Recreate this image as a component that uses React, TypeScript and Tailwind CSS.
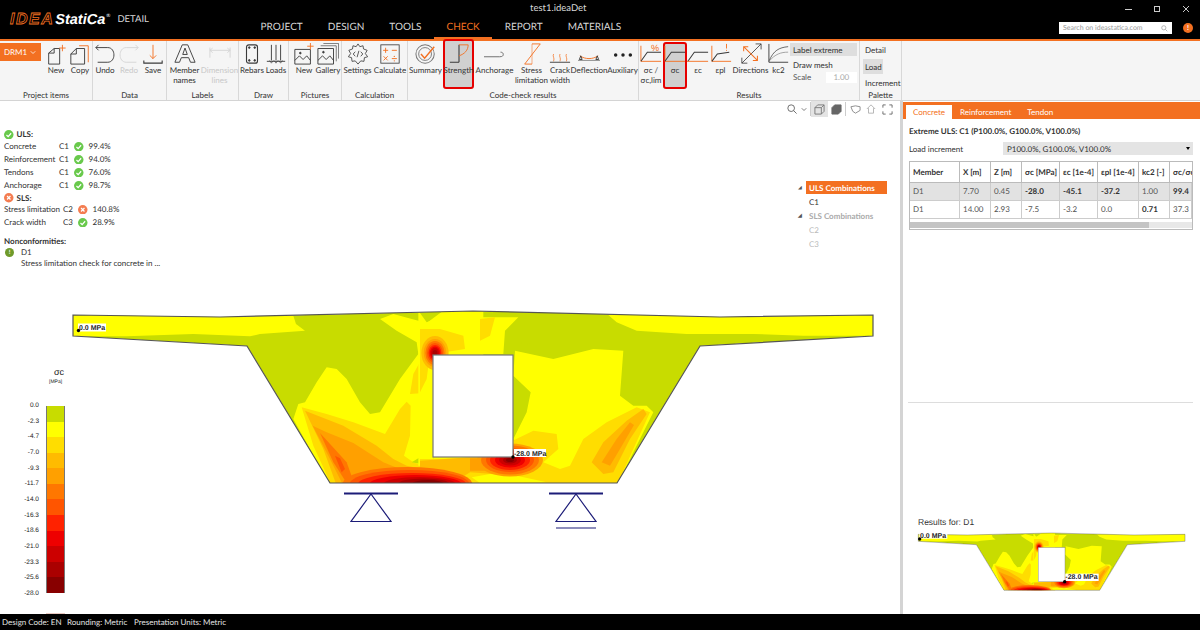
import React from "react";

const O = "#f37021";
const K = "#3a3a3a";
const L = "#d4d4d4";

function Ic({ children, className = "w-[22px] h-[22px]" }: { children: React.ReactNode; className?: string }) {
  return (
    <svg viewBox="0 0 24 24" className={className} fill="none" stroke={K} strokeWidth={1}>
      {children}
    </svg>
  );
}

function Btn({ w, label, children, active, dim }: { w: string; label: React.ReactNode; children: React.ReactNode; active?: string; dim?: boolean }) {
  return (
    <div className={`relative flex flex-col items-center shrink-0 ${w} ${dim ? "text-[#c8c8c8]" : "text-[#333]"}`}>
      {active && <div className={active} />}
      <div className="relative mt-[2px] flex justify-center">{children}</div>
      <div className="relative mt-[1px] text-center leading-[9.5px] whitespace-nowrap">{label}</div>
    </div>
  );
}

function Group({ w, label, children, bar = true }: { w: string; label: string; children: React.ReactNode; bar?: boolean }) {
  return (
    <div className={`flex flex-col shrink-0 h-full ${w} ${bar ? "border-r border-[#d8d8d8]" : ""}`}>
      <div className="flex h-[49px]">{children}</div>
      <div className="text-center text-[#333] leading-[10px] mt-[1px]">{label}</div>
    </div>
  );
}

const axisIcon = (extra: React.ReactNode) => (
  <Ic>
    {extra}
    <path d="M1 3V20H23" stroke={O} />
    <path d="M1 20L8 10H23" stroke={K} strokeWidth={1.1} />
  </Ic>
);

function Check({ bad }: { bad?: boolean }) {
  return (
    <svg viewBox="0 0 10 10" className="w-[9.5px] h-[9.5px] shrink-0">
      <circle cx="5" cy="5" r="5" fill={bad ? "#f47c50" : "#69c94c"} />
      {bad ? (
        <path d="M3.2 3.2L6.8 6.8M6.8 3.2L3.2 6.8" stroke="#fff" strokeWidth={1.3} />
      ) : (
        <path d="M2.6 5.2L4.4 7L7.5 3.4" stroke="#fff" strokeWidth={1.3} fill="none" />
      )}
    </svg>
  );
}

function Section({ id, className, labels }: { id: string; className: string; labels: { x: number; y: number; w: number; h: number; fs: number; t: string; tx: number; ty: number; dx: number; dy: number; r: number }[] }) {
  const outline = "73,316 220,318 473,312 720,318 873,316 873,337 700,347 617,484 330,484 247,347 73,337";
  const left = "translate(60 300) scale(0.33333)";
  const right = "translate(420 300) scale(0.33333)";
  const c = ["#ffdd00", "#ffbb00", "#ffa000", "#ff7700", "#ff5500", "#ff2200", "#ee0000", "#cc0000", "#aa0000", "#880000"];
  const bottom: [number, number][] = [[65, 17], [60, 14], [54, 11], [46, 9], [36, 7], [26, 5.5], [16, 4]];
  return (
    <svg viewBox="60 300 840 240" className={className}>
      <defs>
        <clipPath id={id}>
          <polygon points={outline} />
        </clipPath>
      </defs>
      <g clipPath={`url(#${id})`}>
        <polygon points={outline} fill="#c8dc00" />
        <g transform={left}>
          <polygon fill="#ffff00" points="30,40 700,50 708,75 735,95 600,105 570,112 400,105 200,112 30,112" />
          <polygon fill="#ffff00" points="700,360 715,315 735,310 770,250 800,205 830,210 860,240 900,310 930,345 960,340 1020,240 1075,165 1070,130 1010,95 960,60 1000,45 1100,72 1150,35 1270,35 1270,560 810,560" />
          <polygon fill="#ffdd00" points="725,325 800,345 880,370 975,405 1020,330 1040,308 1052,320 1050,410 1032,470 1060,490 1100,505 1130,480 1270,475 1270,560 815,560 760,440" />
          <polygon fill="#c8dc00" points="1055,490 1085,472 1112,482 1100,498" />
          <polygon fill="#ffdd00" points="1050,285 1060,225 1085,180 1120,165 1120,280" />
          <polygon fill="#ffdd00" points="1088,140 1140,100 1180,95 1270,100 1270,165 1120,165" />
          <polygon fill="#c8dc00" points="1108,300 1120,300 1120,480 1112,480" />
          <polygon fill="#ffbb00" points="735,335 850,380 950,440 1000,480 1040,500 1100,512 1130,495 1270,478 1270,560 830,560 790,450" />
          <polygon fill="#ffa000" points="758,380 800,400 880,432 970,490 1020,510 1270,505 1270,560 850,560 810,480" />
          <polygon fill="#ff7700" points="780,402 815,440 860,490 880,545 860,552 820,490" />
          <polygon fill="#ff5500" points="825,470 840,478 855,510 845,520" />
        </g>
        <g transform={right}>
          <polygon fill="#ffff00" points="565,48 1365,48 1365,110 1150,110 1000,105 800,105 650,95 590,70" />
          <polygon fill="#ffff00" points="285,155 400,180 520,150 610,155 600,290 640,320 680,320 700,340 590,560 380,560 280,420 320,340 332,280 280,230" />
          <polygon fill="#ffff00" points="-5,35 20,70 70,50 180,55 295,55 255,95 250,165 -5,165" />
          <polygon fill="#ffff00" points="-5,165 40,165 40,500 -5,500" />
          <polygon fill="#c8dc00" points="0,480 42,480 42,495 0,500" />
          <polygon fill="#ffdd00" points="180,60 225,55 210,110 180,125" />
          <polygon fill="#ffdd00" points="0,90 60,90 130,110 135,150 40,165 0,165" />
          <polygon fill="#ffdd00" points="0,165 30,165 20,240 0,280" />
          <polygon fill="#c8dc00" points="305,130 320,128 322,138 306,140" />
          <polygon fill="#c8dc00" points="328,130 342,128 342,136 328,138" />
          <polygon fill="#ffdd00" points="278,425 340,395 410,405 415,450 370,490 420,510 450,500 490,420 560,370 650,325 690,340 590,560 0,560 0,480 278,480" />
          <polygon fill="#ffff00" points="155,535 210,525 290,530 380,550 180,552" />
          <polygon fill="#ffbb00" points="515,490 550,430 620,365 670,330 680,345 630,420 580,520 550,525" />
          <polygon fill="#ffa000" points="545,490 590,420 630,370 642,378 600,450 570,500" />
          <polygon fill="#ffbb00" points="0,485 150,475 150,520 100,552 0,560" />
          <polygon fill="#ffbb00" points="150,475 278,470 345,470 350,500 290,530 150,520" />
          <polygon fill="#ffa000" points="150,478 290,478 330,490 290,515 150,515" />
        </g>
        {[17, 14, 12, 10, 8, 6.5, 5, 3].map((r, i) => (
          <ellipse key={i} cx={435} cy={354} rx={r * 0.8} ry={r} fill={c[i + 1]} />
        ))}
        {bottom.map(([rx, ry], i) => (
          <ellipse key={i} cx={428 - (rx - 16) * 0.42} cy={485} rx={rx} ry={ry} fill={c[i + 3]} />
        ))}
        {[33, 29, 24, 20, 15, 11, 7, 4].map((r, i) => (
          <ellipse key={i} cx={510} cy={461} rx={r} ry={r * 0.5} fill={c[i + 2]} />
        ))}
        <rect x="433" y="356" width="80" height="102" fill="#fff" />
      </g>
      <polygon points={outline} fill="none" stroke="#555" strokeWidth={1.2} />
      <rect x="433" y="356" width="80" height="102" fill="#fff" stroke="#777" strokeWidth={1.2} />
      {labels.map((l) => (
        <g key={l.t}>
          <rect x={l.x} y={l.y} width={l.w} height={l.h} fill="#fff" />
          <text x={l.tx} y={l.ty} fontSize={l.fs} fontFamily="Liberation Sans" fontWeight="700" fill="#222">{l.t}</text>
          <circle cx={l.dx} cy={l.dy} r={l.r} fill="#000" />
        </g>
      ))}
    </svg>
  );
}

function Support({ left }: { left: boolean }) {
  return (
    <svg viewBox="0 0 60 40" className="w-[60px] h-[40px]" fill="none" stroke="#1c1c78">
      <path d="M3 1.5H57" strokeWidth={2} />
      <path d="M30 2L50 29.5H10Z" strokeWidth={1.2} />
      {!left && <path d="M10 36H50" strokeWidth={1.2} />}
    </svg>
  );
}

const legendColors = ["#c8dc00", "#ffff00", "#ffdd00", "#ffbb00", "#ffa000", "#ff7700", "#ff5500", "#ff2200", "#ee0000", "#cc0000", "#aa0000", "#880000"];
const legendValues = ["0.0", "-2.3", "-4.7", "-7.0", "-9.3", "-11.7", "-14.0", "-16.3", "-18.6", "-21.0", "-23.3", "-25.6", "-28.0"];

const uls = [
  ["Concrete", "99.4%"],
  ["Reinforcement", "94.0%"],
  ["Tendons", "76.0%"],
  ["Anchorage", "98.7%"],
];

const headers = [
  ["Member", "w-[50px]"],
  ["X [m]", "w-[31px]"],
  ["Z [m]", "w-[31px]"],
  ["σc [MPa]", "w-[38px]"],
  ["εc [1e-4]", "w-[38px]"],
  ["εpl [1e-4]", "w-[41px]"],
  ["kc2 [-]", "w-[31px]"],
  ["σc/σc", "flex-1"],
];
const rows: [string, boolean][][] = [
  [["D1", false], ["7.70", false], ["0.45", false], ["-28.0", true], ["-45.1", true], ["-37.2", true], ["1.00", false], ["99.4", true]],
  [["D1", false], ["14.00", false], ["2.93", false], ["-7.5", false], ["-3.2", false], ["0.0", false], ["0.71", true], ["37.3", false]],
];

export default function App() {
  return (
    <div className="w-[1200px] h-[630px] flex flex-col overflow-hidden bg-white font-['Lato',sans-serif] text-[8px] text-[#333] [text-rendering:geometricPrecision]">
      {/* Title bar */}
      <header className="h-[41px] shrink-0 bg-black border-b-2 border-[#f37021] flex">
        <div className="w-[248px] shrink-0 flex items-center pl-[10px] pt-[1px]">
          <span className="font-['Liberation_Sans',sans-serif] font-bold italic text-[16px] leading-none tracking-[1.5px] text-transparent [-webkit-text-stroke:0.8px_#f37021]">IDEA</span>
          <span className="ml-[1px] font-['Liberation_Sans',sans-serif] font-bold italic text-[14.5px] leading-none text-white">StatiCa</span>
          <span className="text-[5px] text-white self-start mt-[12px] ml-[1px]">®</span>
          <span className="ml-[7px] text-[9.5px] text-[#d8d8d8]">DETAIL</span>
        </div>
        <div className="flex-1 flex flex-col">
          <div className="h-[18px] flex items-center text-[#d8d8d8]">
            <span className="ml-[282px] text-[9.5px]">test1.ideaDet</span>
            <div className="ml-auto flex items-center">
              <span className="w-[7px] h-px bg-[#ccc] mr-[22px]" />
              <span className="w-[6px] h-[6px] border border-[#ccc] mr-[22px]" />
              <svg viewBox="0 0 8 8" className="w-[8px] h-[8px] mr-[10px]" stroke="#ddd" strokeWidth={0.9}>
                <path d="M1 1L7 7M7 1L1 7" />
              </svg>
            </div>
          </div>
          <div className="flex-1 flex items-stretch">
            {["PROJECT", "DESIGN", "TOOLS", "CHECK", "REPORT", "MATERIALS"].map((n) => (
              <div
                key={n}
                className={`px-[12.5px] flex items-center text-[10px] border-b-2 ${n === "CHECK" ? "text-[#f37021] border-[#f37021]" : "text-[#d8d8d8] border-transparent"}`}
              >
                {n}
              </div>
            ))}
            <div className="ml-auto flex items-start mr-[7px]">
              <div className="w-[113px] h-[12px] mt-[4px] bg-white flex items-center justify-between px-[4px] text-[7px] text-[#999]">
                Search on ideastatica.com
                <svg viewBox="0 0 10 10" className="w-[7px] h-[7px]" fill="none" stroke="#999">
                  <circle cx="4" cy="4" r="3" />
                  <path d="M6.3 6.3L9 9" />
                </svg>
              </div>
              <div className="ml-[11px] mt-[5px] w-[10px] h-[10px] rounded-full bg-[#f37021] text-white text-[7px] leading-[10px] text-center font-bold">!</div>
            </div>
          </div>
        </div>
      </header>

      {/* Ribbon */}
      <div className="h-[60px] shrink-0 bg-[#f5f5f5] border-b border-[#d4d4d4] flex">
        <Group w="w-[93px]" label="Project items">
          <div className="w-[41px] h-[18px] mt-[2px] bg-[#f37021] text-white flex items-center justify-between pl-[4px] pr-[5px] shrink-0">
            DRM1
            <svg viewBox="0 0 8 8" className="w-[6px] h-[6px]" fill="none" stroke="#fff"><path d="M1 3L4 6L7 3" /></svg>
          </div>
          <div className="w-[3px]" />
          <Btn w="w-[24px]" label="New">
            <Ic>
              <path d="M4 23V11L10 6H16V23H4Z" />
              <path d="M4 11H10V6" />
              <path d="M19 2V9M15.5 5.5H22.5" stroke={O} />
            </Ic>
          </Btn>
          <Btn w="w-[24px]" label="Copy">
            <Ic>
              <path d="M2 23V12L8 6H17V23H2Z" />
              <path d="M2 12H8V6" />
              <path d="M11 3H21V21" stroke={O} />
            </Ic>
          </Btn>
        </Group>
        <Group w="w-[74px]" label="Data">
          <Btn w="w-[24px]" label="Undo">
            <Ic>
              <path d="M2 5H15C24 5 24 21 15 21H4" />
              <path d="M5 2L2 5L5 8" />
            </Ic>
          </Btn>
          <Btn w="w-[24px]" label="Redo" dim>
            <Ic>
              <path d="M22 5H9C0 5 0 21 9 21H20" stroke={L} />
              <path d="M19 2L22 5L19 8" stroke={L} />
            </Ic>
          </Btn>
          <Btn w="w-[24px]" label="Save">
            <Ic>
              <path d="M12 2V17M8.5 13.5L12 17L15.5 13.5" stroke={O} />
              <path d="M2 19V22H22V19" strokeWidth={1.2} />
            </Ic>
          </Btn>
        </Group>
        <Group w="w-[72px]" label="Labels">
          <Btn w="w-[35px]" label={<>Member<br />names</>}>
            <Ic>
              <path d="M1 21L9 2H15L23 21H18L16 16H8L6 21Z" />
              <path d="M9.5 12.5L12 5.5L14.5 12.5Z" />
            </Ic>
          </Btn>
          <Btn w="w-[35px]" label={<>Dimension<br />lines</>} dim>
            <Ic>
              <path d="M1 5V16M23 5V16M1 8H23M4 5.5L1 8L4 10.5M20 5.5L23 8L20 10.5" stroke={L} />
            </Ic>
          </Btn>
        </Group>
        <Group w="w-[50px]" label="Draw">
          <div className="w-[2px]" />
          <Btn w="w-[24px]" label="Rebars">
            <Ic>
              <rect x="6" y="2" width="12" height="20" rx="2.5" strokeWidth={1.2} />
              <circle cx="9" cy="5" r="0.9" fill={K} />
              <circle cx="15" cy="5" r="0.9" fill={K} />
              <circle cx="9" cy="19" r="0.9" fill={K} />
              <circle cx="15" cy="19" r="0.9" fill={K} />
            </Ic>
          </Btn>
          <Btn w="w-[24px]" label="Loads">
            <Ic>
              <path d="M7 2V19M12 2V19M17 2V19M2 20H22" />
              <path d="M5 19L7 22L9 19M10 19L12 22L14 19M15 19L17 22L19 19" strokeWidth={0.7} />
            </Ic>
          </Btn>
        </Group>
        <Group w="w-[53px]" label="Pictures">
          <div className="w-[3px]" />
          <Btn w="w-[24px]" label="New">
            <Ic>
              <path d="M2 7H19V23H2Z" />
              <path d="M2 19L7 14L11 18L15 14L19 19" />
              <circle cx="8" cy="11" r="0.9" fill={K} />
              <path d="M19 0V7M15.5 3.5H22.5" stroke={O} />
            </Ic>
          </Btn>
          <Btn w="w-[24px]" label="Gallery">
            <Ic>
              <path d="M1 6H18V23H1Z" />
              <path d="M1 19L6 14L10 18L14 14L18 19" />
              <circle cx="7" cy="10" r="0.9" fill={K} />
              <path d="M4 3H21V20M7 0.5H23.5V17" stroke={K} strokeWidth={0.7} />
            </Ic>
          </Btn>
        </Group>
        <Group w="w-[66px]" label="Calculation">
          <Btn w="w-[31px]" label="Settings">
            <Ic>
              <path d="M12 1L14 4L17.5 3L18 6.5L22 8L20 11.5L22.5 15L19 16L18.5 20L15 19.5L12 23L9 19.5L5.5 20L5 16L1.5 15L4 11.5L2 8L6 6.5L6.5 3L10 4Z" strokeWidth={0.9} />
              <path d="M9 9.5L6.8 12L9 14.5M15 9.5L17.2 12L15 14.5M13 8.5L11 15.5" strokeWidth={0.9} />
            </Ic>
          </Btn>
          <Btn w="w-[34px]" label="Calculate">
            <Ic>
              <rect x="2" y="2" width="20" height="20" stroke={K} strokeWidth={0.9} />
              <path d="M4.5 8H10M7.2 5.2V10.8M14 8H19.5M5 14.5L9.5 19M9.5 14.5L5 19M14 17H19.5" stroke={O} />
              <circle cx="16.7" cy="14.6" r="0.7" fill={O} stroke="none" />
              <circle cx="16.7" cy="19.4" r="0.7" fill={O} stroke="none" />
            </Ic>
          </Btn>
        </Group>
        <Group w="w-[231px]" label="Code-check results">
          <Btn w="w-[35px]" label="Summary">
            <Ic>
              <circle cx="11" cy="12" r="10" strokeWidth={1.1} stroke="#777" />
              <circle cx="11" cy="12" r="7" strokeWidth={1} stroke="#777" />
              <path d="M6.5 12L10.5 16.5L21 4" stroke={O} strokeWidth={1.6} />
            </Ic>
          </Btn>
          <Btn w="w-[31px]" label="Strength" active="absolute left-0 right-0 top-[-2px] h-[50px] bg-[#d0d0d0] border-2 border-[#e60000] rounded-[3px]">
            <Ic>
              <path d="M12 2V21M2 21H12" strokeWidth={1.2} />
              <path d="M12 2H22C22 8 18 12 12 14" stroke={O} />
            </Ic>
          </Btn>
          <Btn w="w-[41px]" label="Anchorage">
            <Ic>
              <path d="M0 15H17C20 15 21 14 21 12.5C21 11 20 10 18 10" strokeWidth={1} stroke="#666" />
            </Ic>
          </Btn>
          <Btn w="w-[33px]" label={<>Stress<br />limitation</>}>
            <Ic>
              <path d="M12 1H21L4 23H12" stroke={O} />
              <path d="M12 1V23" stroke={O} strokeWidth={0.6} />
            </Ic>
          </Btn>
          <Btn w="w-[24px]" label={<>Crack<br />width</>}>
            <Ic>
              <path d="M5 12C3.5 15 6.5 16 5 20M12 12C10.5 15 13.5 16 12 20M19 12C17.5 15 20.5 16 19 20" stroke={O} strokeWidth={0.8} />
              <path d="M1 21H23" />
            </Ic>
          </Btn>
          <Btn w="w-[34px]" label="Deflection">
            <Ic>
              <path d="M2 14C8 18 16 18 22 14" stroke={O} />
              <path d="M3 14L1.5 18H4.5ZM21 14L19.5 18H22.5Z" />
              <path d="M0 19H24" strokeWidth={0.6} />
            </Ic>
          </Btn>
          <Btn w="w-[33px]" label="Auxiliary">
            <Ic>
              <circle cx="4" cy="13" r="1.9" fill="#222" stroke="none" />
              <circle cx="12" cy="13" r="1.9" fill="#222" stroke="none" />
              <circle cx="20" cy="13" r="1.9" fill="#222" stroke="none" />
            </Ic>
          </Btn>
        </Group>
        <Group w="w-[221px]" label="Results">
          <div className="w-px" />
          <Btn w="w-[24px]" label={<>σc /<br />σc,lim</>}>
            {axisIcon(<text x="12" y="9" fontSize="10" fill={O} stroke="none" fontFamily="Liberation Sans">%</text>)}
          </Btn>
          <Btn w="w-[24px]" label="σc" active="absolute left-0 right-0 top-[1px] h-[47px] bg-[#d0d0d0] border-2 border-[#e60000] rounded-[3px]">
            {axisIcon(null)}
          </Btn>
          <Btn w="w-[22px]" label="εc">
            <Ic>
              <path d="M1 20L8 10H23" strokeWidth={1.1} />
              <path d="M0 20H23" stroke={O} />
            </Ic>
          </Btn>
          <Btn w="w-[23px]" label="εpl">
            <Ic>
              <path d="M2 3V20H23" stroke={O} />
              <path d="M2 20L8 12L21 10" strokeWidth={1.1} />
              <path d="M18 1V6M18 7.5V8.5" stroke={O} />
            </Ic>
          </Btn>
          <Btn w="w-[37px]" label="Directions">
            <Ic>
              <path d="M2 22L23 1M17 1H23V7M2 16V22H8" strokeWidth={0.9} />
              <path d="M4 4L19 19M4 9V4H9M19 14V19H14" stroke={O} strokeWidth={1.1} />
            </Ic>
          </Btn>
          <Btn w="w-[19px]" label="kc2">
            <Ic>
              <path d="M1 1V21H22" />
              <path d="M1 20C6 8 12 5 22 4" strokeWidth={0.8} />
              <path d="M1 20C8 12 14 10 22 10" strokeWidth={0.8} stroke="#888" />
            </Ic>
          </Btn>
          <div className="flex-1 pl-[2px] pr-[7px] flex flex-col text-[#333]">
            <div className="h-[13px] mt-[2px] bg-[#dedede] pl-[3px] leading-[14px]">Label extreme</div>
            <div className="h-[14px] pl-[3px] leading-[18px]">Draw mesh</div>
            <div className="flex items-center h-[12px] mt-[1px] pl-[3px] text-[#555]">
              Scale
              <div className="ml-[15px] w-[31px] h-[11px] bg-white text-right pr-[8px] text-[#aaa] leading-[11px]">1.00</div>
            </div>
          </div>
        </Group>
        <Group w="w-[42px]" label="Palette">
          <div className="flex flex-col w-full pl-[3px]">
            <div className="h-[12px] mt-[3px] pl-[2px] leading-[13px]">Detail</div>
            <div className="w-[20px] h-[15px] mt-[3px] bg-[#dedede] pl-[2px] leading-[16px]">Load</div>
            <div className="pl-[2px] mt-[3px] leading-[12px] whitespace-nowrap">Increment</div>
          </div>
        </Group>
      </div>

      {/* Main */}
      <div className="flex-1 min-h-0 flex">
        <main className="relative flex-1 min-w-0 pl-[4px] pt-[28px] leading-[13px]">
          {/* Results summary */}
          <div className="flex items-center gap-[2px] font-bold h-[11px]"><Check /><span className="ml-[1px]">ULS:</span></div>
          {uls.map(([n, p]) => (
            <div key={n} className="flex items-center h-[13px]">
              <span className="w-[55px] whitespace-nowrap">{n}</span>
              <span className="w-[15px]">C1</span>
              <Check />
              <span className="ml-[5px]">{p}</span>
            </div>
          ))}
          <div className="flex items-center gap-[2px] font-bold h-[10px] mt-[1px]"><Check bad /><span className="ml-[1px]">SLS:</span></div>
          <div className="flex items-center h-[13px]">
            <span className="w-[59px] whitespace-nowrap">Stress limitation</span>
            <span className="w-[15px]">C2</span>
            <Check bad />
            <span className="ml-[5px]">140.8%</span>
          </div>
          <div className="flex items-center h-[13px]">
            <span className="w-[59px]">Crack width</span>
            <span className="w-[15px]">C3</span>
            <Check />
            <span className="ml-[5px]">28.9%</span>
          </div>
          <div className="font-bold mt-[7px] h-[11px] leading-[11px]">Nonconformities:</div>
          <div className="flex items-center h-[11px] pl-px">
            <span className="w-[9px] h-[9px] rounded-full bg-[#6f9a2a] text-white text-[6px] leading-[9px] text-center font-bold mr-[7px]">!</span>
            D1
          </div>
          <div className="pl-[17px] h-[10px] leading-[10px]">Stress limitation check for concrete in ...</div>

          {/* Canvas toolbar */}
          <div className="absolute right-[7px] top-[0px] h-[16px] flex items-center text-[#555]">
            <svg viewBox="0 0 12 12" className="w-[10px] h-[10px]" fill="none" stroke="#555"><circle cx="5" cy="5" r="4" /><path d="M8 8L11.5 11.5" /></svg>
            <svg viewBox="0 0 8 8" className="w-[6px] h-[6px] ml-[4px]" fill="none" stroke="#555"><path d="M1 3L4 6L7 3" /></svg>
            <span className="w-px h-[14px] bg-[#ccc] ml-[3px]" />
            <div className="w-[17px] h-[16px] bg-[#e4e4e4] flex items-center justify-center">
              <svg viewBox="0 0 12 12" className="w-[11px] h-[11px]" fill="none" stroke="#777"><path d="M1 4L4 1H11V8L8 11H1ZM1 4H8V11M8 4L11 1" /></svg>
            </div>
            <div className="w-[17px] h-[16px] flex items-center justify-center">
              <svg viewBox="0 0 12 12" className="w-[11px] h-[11px]" fill="#666" stroke="#666"><path d="M1 4L4 1H11V8L8 11H1Z" /></svg>
            </div>
            <span className="w-px h-[14px] bg-[#ccc]" />
            <svg viewBox="0 0 12 12" className="w-[11px] h-[11px] ml-[4px]" fill="none" stroke="#888"><path d="M1 3L6 2L11 3V7L6 10L3 8Z" /></svg>
            <svg viewBox="0 0 12 12" className="w-[10px] h-[10px] ml-[5px]" fill="none" stroke="#aaa"><path d="M1 6L6 1L11 6M3 5V11H9V5" /></svg>
            <svg viewBox="0 0 12 12" className="w-[11px] h-[11px] ml-[6px]" fill="none" stroke="#666"><path d="M1 4V1H4M8 1H11V4M1 8V11H4M8 11H11V8" /></svg>
          </div>

          {/* Combination tree */}
          <div className="absolute left-[798px] top-[80px] w-[90px] leading-[14px]">
            <div className="flex items-center h-[13px]">
              <span className="w-[8px] text-[5px] text-[#555]">◢</span>
              <span className="w-[81px] h-[13px] bg-[#f37021] text-white font-bold pl-[3px] leading-[14px]">ULS Combinations</span>
            </div>
            <div className="pl-[11px] mt-[1px]">C1</div>
            <div className="flex items-center h-[14px] text-[#aaa] font-bold">
              <span className="w-[11px] text-[5px] text-[#555]">◢</span>SLS Combinations
            </div>
            <div className="pl-[11px] text-[#bbb]">C2</div>
            <div className="pl-[11px] text-[#bbb]">C3</div>
          </div>

          {/* Drawing */}
          <Section
            id="big"
            className="absolute left-[60px] top-[198px] w-[840px] h-[240px]"
            labels={[
              { x: 78, y: 324.5, w: 28, h: 8, fs: 7, t: "0.0 MPa", tx: 79, ty: 330.5, dx: 78.5, dy: 331.5, r: 1.7 },
              { x: 514, y: 450, w: 32, h: 8, fs: 7, t: "-28.0 MPa", tx: 514, ty: 456.5, dx: 513, dy: 458, r: 1.7 },
            ]}
          />
          <div className="absolute left-[341px] top-[391px]"><Support left /></div>
          <div className="absolute left-[546px] top-[391px]"><Support left={false} /></div>

          {/* Legend */}
          <div className="absolute left-[0px] top-[266px] font-['Liberation_Sans',sans-serif] text-[#222]">
            <div className="ml-[54px] text-[9px] leading-[10px]">σc</div>
            <div className="ml-[49px] text-[5px] leading-[6px] mt-[2px]">[MPa]</div>
            <div className="relative mt-[21px] ml-[46px] w-[19px] h-[187px] flex flex-col border-x border-[#777]">
              {legendColors.map((col) => (
                <div key={col} className="flex-1" style={{ background: col }} />
              ))}
              <div className="absolute right-[25px] top-[-5px] h-[197px] flex flex-col justify-between text-right text-[6.5px] leading-[9px]">
                {legendValues.map((v) => (
                  <span key={v}>{v}</span>
                ))}
              </div>
            </div>
          </div>
          <div className="absolute left-[46px] bottom-0 w-[19px] h-px bg-[#e8c8c0]" />
        </main>

        {/* Right panel */}
        <aside className="w-[300px] shrink-0 border-l-[3px] border-[#d4d4d4] flex flex-col">
          <div className="h-[17px] mt-[1px] bg-[#f37021] flex items-end pl-[3px] text-white">
            <div className="w-[46px] h-[14px] bg-white text-[#f37021] text-center leading-[14px]">Concrete</div>
            <div className="ml-[8px] h-[14px] leading-[14px]">Reinforcement</div>
            <div className="ml-[16px] h-[14px] leading-[14px]">Tendon</div>
          </div>
          <div className="mt-[6px] ml-[6px] font-bold leading-[12px]">Extreme ULS: C1 (P100.0%, G100.0%, V100.0%)</div>
          <div className="mt-[5px] ml-[6px] mr-[7px] flex items-center h-[13px]">
            <span className="w-[94px]">Load increment</span>
            <div className="flex-1 h-[13px] bg-[#e4e4e4] flex items-center justify-between pl-[4px] pr-[3px]">
              P100.0%, G100.0%, V100.0%
              <span className="w-0 h-0 border-x-[2.5px] border-t-[3.5px] border-x-transparent border-t-black" />
            </div>
          </div>
          <div className="mt-[6px] ml-[6px] mr-[7px] h-[69px] border border-[#bbb] flex flex-col overflow-hidden">
            <div className="flex h-[21px] font-bold border-b border-[#bbb] shrink-0 bg-white">
              {headers.map(([h, w]) => (
                <div key={h} className={`${w} shrink-0 border-r border-[#bbb] pl-[3px] leading-[20px] whitespace-nowrap`}>{h}</div>
              ))}
            </div>
            {rows.map((r, i) => (
              <div key={i} className={`flex h-[18px] shrink-0 border-b border-[#ccc] text-[#555] ${i === 0 ? "bg-[#e2e2e2]" : "bg-white"}`}>
                {r.map(([t, b], j) => (
                  <div key={j} className={`${headers[j][1]} shrink-0 border-r border-[#ccc] pl-[3px] leading-[17px] ${b ? "font-bold text-[#333]" : ""}`}>{t}</div>
                ))}
              </div>
            ))}
            <div className="mt-[3px] h-[6px] bg-[#e8e8e8] shrink-0">
              <div className="w-[239px] h-full bg-[#c4c4c4]" />
            </div>
          </div>
          <div className="mt-[172px] ml-[5px] mr-[7px] h-px bg-[#ddd]" />
          <div className="mt-auto ml-[15px] font-['Liberation_Sans',sans-serif] text-[8.5px] leading-[10px] text-[#333]">Results for: D1</div>
          <Section
            id="small"
            className="ml-[10.67px] mt-[2px] mb-[5px] w-[280px] h-[80px]"
            labels={[
              { x: 76, y: 311, w: 84, h: 18, fs: 21, t: "0.0 MPa", tx: 78, ty: 326, dx: 77, dy: 330, r: 5 },
              { x: 514, y: 434, w: 100, h: 22, fs: 21, t: "-28.0 MPa", tx: 514, ty: 450, dx: 512, dy: 458, r: 5 },
            ]}
          />
        </aside>
      </div>

      {/* Status bar */}
      <footer className="h-[16px] shrink-0 bg-black text-[#e4e4e4] flex items-center pl-[2px] text-[8px]">
        <span className="w-[65px]">Design Code: EN</span>
        <span className="w-[67px]">Rounding: Metric</span>
        <span>Presentation Units: Metric</span>
      </footer>
    </div>
  );
}
